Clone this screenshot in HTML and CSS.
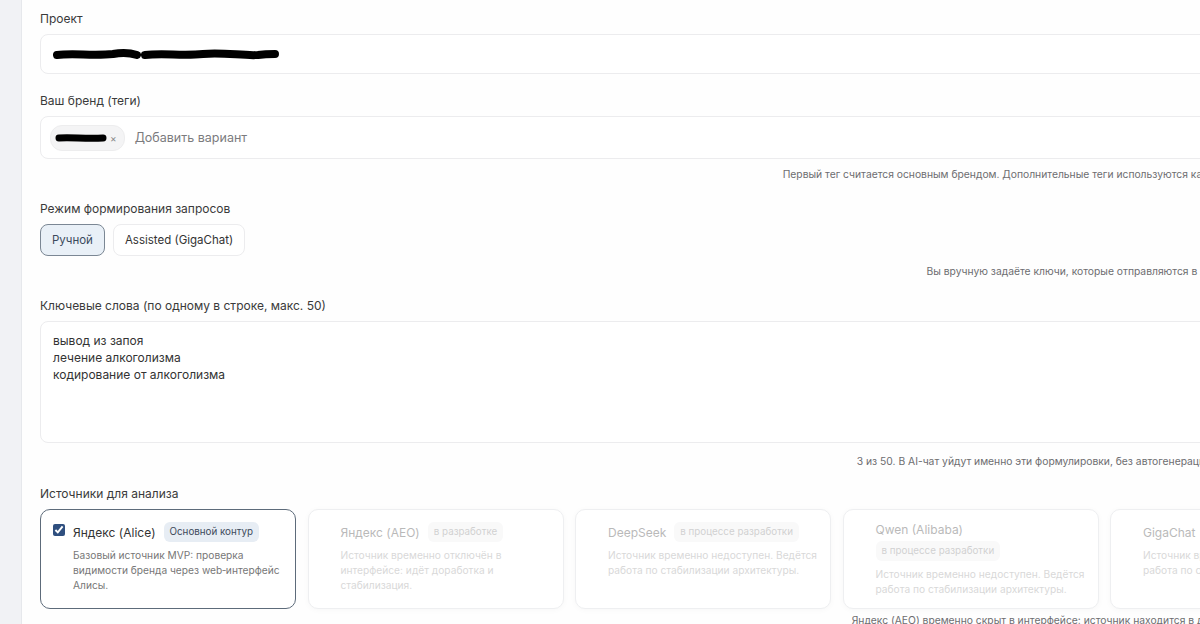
FILE: index.html
```html
<!DOCTYPE html>
<html lang="ru">
<head>
    <meta charset="UTF-8">
    <meta name="viewport" content="width=device-width, initial-scale=1.0">
    <title>Новый проект</title>
    <link rel="stylesheet" href="styles.css">
</head>
<body>
    <div class="layout">
        <!-- Left rail -->
        <aside class="rail"></aside>

        <!-- Project form -->
        <main class="panel">
            <section class="field">
                <label class="field-label">Проект</label>
                <div class="input">
                    <svg class="redacted" width="230" height="14" viewBox="0 0 230 14">
                        <path d="M4 8 C20 6 40 9 60 7 C70 5 78 6 84 8" stroke="#000" stroke-width="8" stroke-linecap="round" fill="none"/>
                        <path d="M92 8 C110 6 130 9 150 7 C170 5 190 9 205 8 C212 7 218 7 222 7" stroke="#000" stroke-width="8" stroke-linecap="round" fill="none"/>
                    </svg>
                </div>
            </section>

            <section class="field">
                <label class="field-label">Ваш бренд (теги)</label>
                <div class="input tags">
                    <span class="chip">
                        <svg width="52" height="10" viewBox="0 0 52 10">
                            <path d="M4 5 C16 4 30 6 48 5" stroke="#000" stroke-width="7" stroke-linecap="round" fill="none"/>
                        </svg>
                        <span class="chip-x">×</span>
                    </span>
                    <span class="placeholder">Добавить вариант</span>
                </div>
                <p class="hint">Первый тег считается основным брендом. Дополнительные теги используются как синонимы при анализе ответов.</p>
            </section>

            <section class="field">
                <label class="field-label">Режим формирования запросов</label>
                <div class="modes">
                    <button class="mode active">Ручной</button>
                    <button class="mode">Assisted (GigaChat)</button>
                </div>
                <p class="hint">Вы вручную задаёте ключи, которые отправляются в AI-чат без каких-либо изменений.</p>
            </section>

            <section class="field field-keywords">
                <label class="field-label">Ключевые слова (по одному в строке, макс. 50)</label>
                <div class="textarea">вывод из запоя<br>лечение алкоголизма<br>кодирование от алкоголизма</div>
                <p class="hint hint-loose">3 из 50. В AI-чат уйдут именно эти формулировки, без автогенерации и перефразирования запросов.</p>
            </section>

            <section class="field">
                <label class="field-label">Источники для анализа</label>
                <div class="sources">
                    <div class="source selected">
                        <input type="checkbox" checked>
                        <div class="source-body">
                            <div class="source-head">
                                <span class="source-name">Яндекс (Alice)</span>
                                <span class="badge">Основной контур</span>
                            </div>
                            <p class="source-desc">Базовый источник MVP: проверка видимости бренда через web&#8209;интерфейс Алисы.</p>
                        </div>
                    </div>
                    <div class="source disabled">
                        <input type="checkbox" disabled>
                        <div class="source-body">
                            <div class="source-head">
                                <span class="source-name">Яндекс (AEO)</span>
                                <span class="badge">в разработке</span>
                            </div>
                            <p class="source-desc">Источник временно отключён в интерфейсе: идёт доработка и стабилизация.</p>
                        </div>
                    </div>
                    <div class="source disabled">
                        <input type="checkbox" disabled>
                        <div class="source-body">
                            <div class="source-head">
                                <span class="source-name">DeepSeek</span>
                                <span class="badge">в процессе разработки</span>
                            </div>
                            <p class="source-desc">Источник временно недоступен. Ведётся работа по стабилизации архитектуры.</p>
                        </div>
                    </div>
                    <div class="source disabled">
                        <input type="checkbox" disabled>
                        <div class="source-body">
                            <div class="source-head">
                                <span class="source-name">Qwen (Alibaba)</span>
                                <span class="badge">в процессе разработки</span>
                            </div>
                            <p class="source-desc">Источник временно недоступен. Ведётся работа по стабилизации архитектуры.</p>
                        </div>
                    </div>
                    <div class="source disabled">
                        <input type="checkbox" disabled>
                        <div class="source-body">
                            <div class="source-head">
                                <span class="source-name">GigaChat</span>
                                <span class="badge">в разработке</span>
                            </div>
                            <p class="source-desc">Источник временно недоступен. Ведётся работа по стабилизации.</p>
                        </div>
                    </div>
                </div>
                <p class="hint hint-close">Яндекс (AEO) временно скрыт в интерфейсе: источник находится в доработке. Ведётся стабилизация.</p>
            </section>
        </main>
    </div>
</body>
</html>
```

FILE: styles.css
```css
/* Global Styles */
body {
    font-family: 'Inter', 'Noto Sans', sans-serif;
    background-color: #fbfbfc;
    color: #333;
    margin: 0;
    padding: 0;
    overflow: hidden;
}

.layout {
    display: flex;
    width: 1400px;
    height: 624px;
}

/* Left rail */
.rail {
    width: 21px;
    flex-shrink: 0;
    background-color: #f1f2f5;
    border-right: 1px solid #e6e8ec;
}

/* Form panel */
.panel {
    width: 1333px;
    padding: 11px 0 0 18px;
    background-color: #fefefe;
}

.field {
    margin-bottom: 20px;
}

.field:first-child {
    margin-bottom: 19px;
}

.field-keywords {
    margin-bottom: 18px;
}

.field-label {
    display: block;
    font-size: 12px;
    line-height: 16px;
    color: #3a3a3a;
    margin-bottom: 7px;
}

.input {
    display: flex;
    align-items: center;
    height: 38px;
    padding: 0 12px;
    border: 1px solid #ececee;
    border-radius: 8px;
    background-color: #fff;
}

/* Tags */
.input.tags {
    height: 41px;
    margin-top: 1px;
    padding: 0 9px;
    gap: 10px;
}

.chip {
    display: inline-flex;
    align-items: center;
    gap: 3px;
    height: 24px;
    padding: 0 7px 0 4px;
    background-color: #f4f4f5;
    border: 1px solid #ededee;
    border-radius: 12px;
}

.chip-x {
    font-size: 10px;
    color: #888;
}

.placeholder {
    font-size: 12.5px;
    color: #7b7b7e;
}

.hint {
    margin: 8px 0 0;
    font-size: 10.3px;
    line-height: 14px;
    color: #6d6d70;
    text-align: right;
}

.hint-loose {
    margin-top: 11px;
}

.hint-close {
    margin-top: 4px;
}

/* Mode switch */
.modes {
    display: flex;
    gap: 8px;
    margin-top: 1px;
}

.mode {
    height: 32px;
    padding: 0 11px;
    font-family: inherit;
    font-size: 11.5px;
    color: #333;
    background-color: #fff;
    border: 1px solid #ececee;
    border-radius: 8px;
}

.mode.active {
    background-color: #e9f0f7;
    border-color: #7b8794;
    color: #3b4a5c;
}

/* Keywords */
.textarea {
    height: 102px;
    margin-top: 2px;
    padding: 10px 12px 8px;
    font-size: 12px;
    line-height: 17px;
    color: #333;
    border: 1px solid #ececee;
    border-radius: 8px;
    background-color: #fff;
}

/* Sources */
.sources {
    display: grid;
    grid-template-columns: repeat(5, 256px);
    gap: 11.5px;
    margin-top: 2px;
}

.source {
    display: flex;
    gap: 8px;
    height: 100px;
    box-sizing: border-box;
    padding: 12px 10px 0 12px;
    border: 1px solid #eeeff1;
    border-radius: 10px;
    background-color: #fff;
}

.source input {
    width: 12px;
    height: 12px;
    margin: 2px 0 0 0;
    flex-shrink: 0;
    accent-color: #2f4f7f;
}

.source.selected {
    border-color: #5d6b7a;
}

.source.disabled {
    box-shadow: 0 1px 6px rgba(0, 0, 0, 0.03);
}

.source.disabled input {
    opacity: 0;
}

.source.disabled .source-body {
    opacity: 0.45;
}

.source-head {
    display: flex;
    flex-wrap: wrap;
    align-items: center;
    gap: 4px 8px;
}

.source-name {
    font-size: 12px;
    color: #333;
}

.source.disabled .source-name {
    color: #666;
}

.badge {
    padding: 4px 6px;
    font-size: 9.8px;
    line-height: 12px;
    color: #3d4a5a;
    background-color: #e7edf4;
    border-radius: 6px;
}

.source.disabled .badge {
    color: #999;
    background-color: #f2f2f3;
}

.source-desc {
    margin: 6px 0 0;
    font-size: 10.2px;
    line-height: 15px;
    color: #777;
}

.source.disabled .source-desc {
    color: #aaa;
}
```
